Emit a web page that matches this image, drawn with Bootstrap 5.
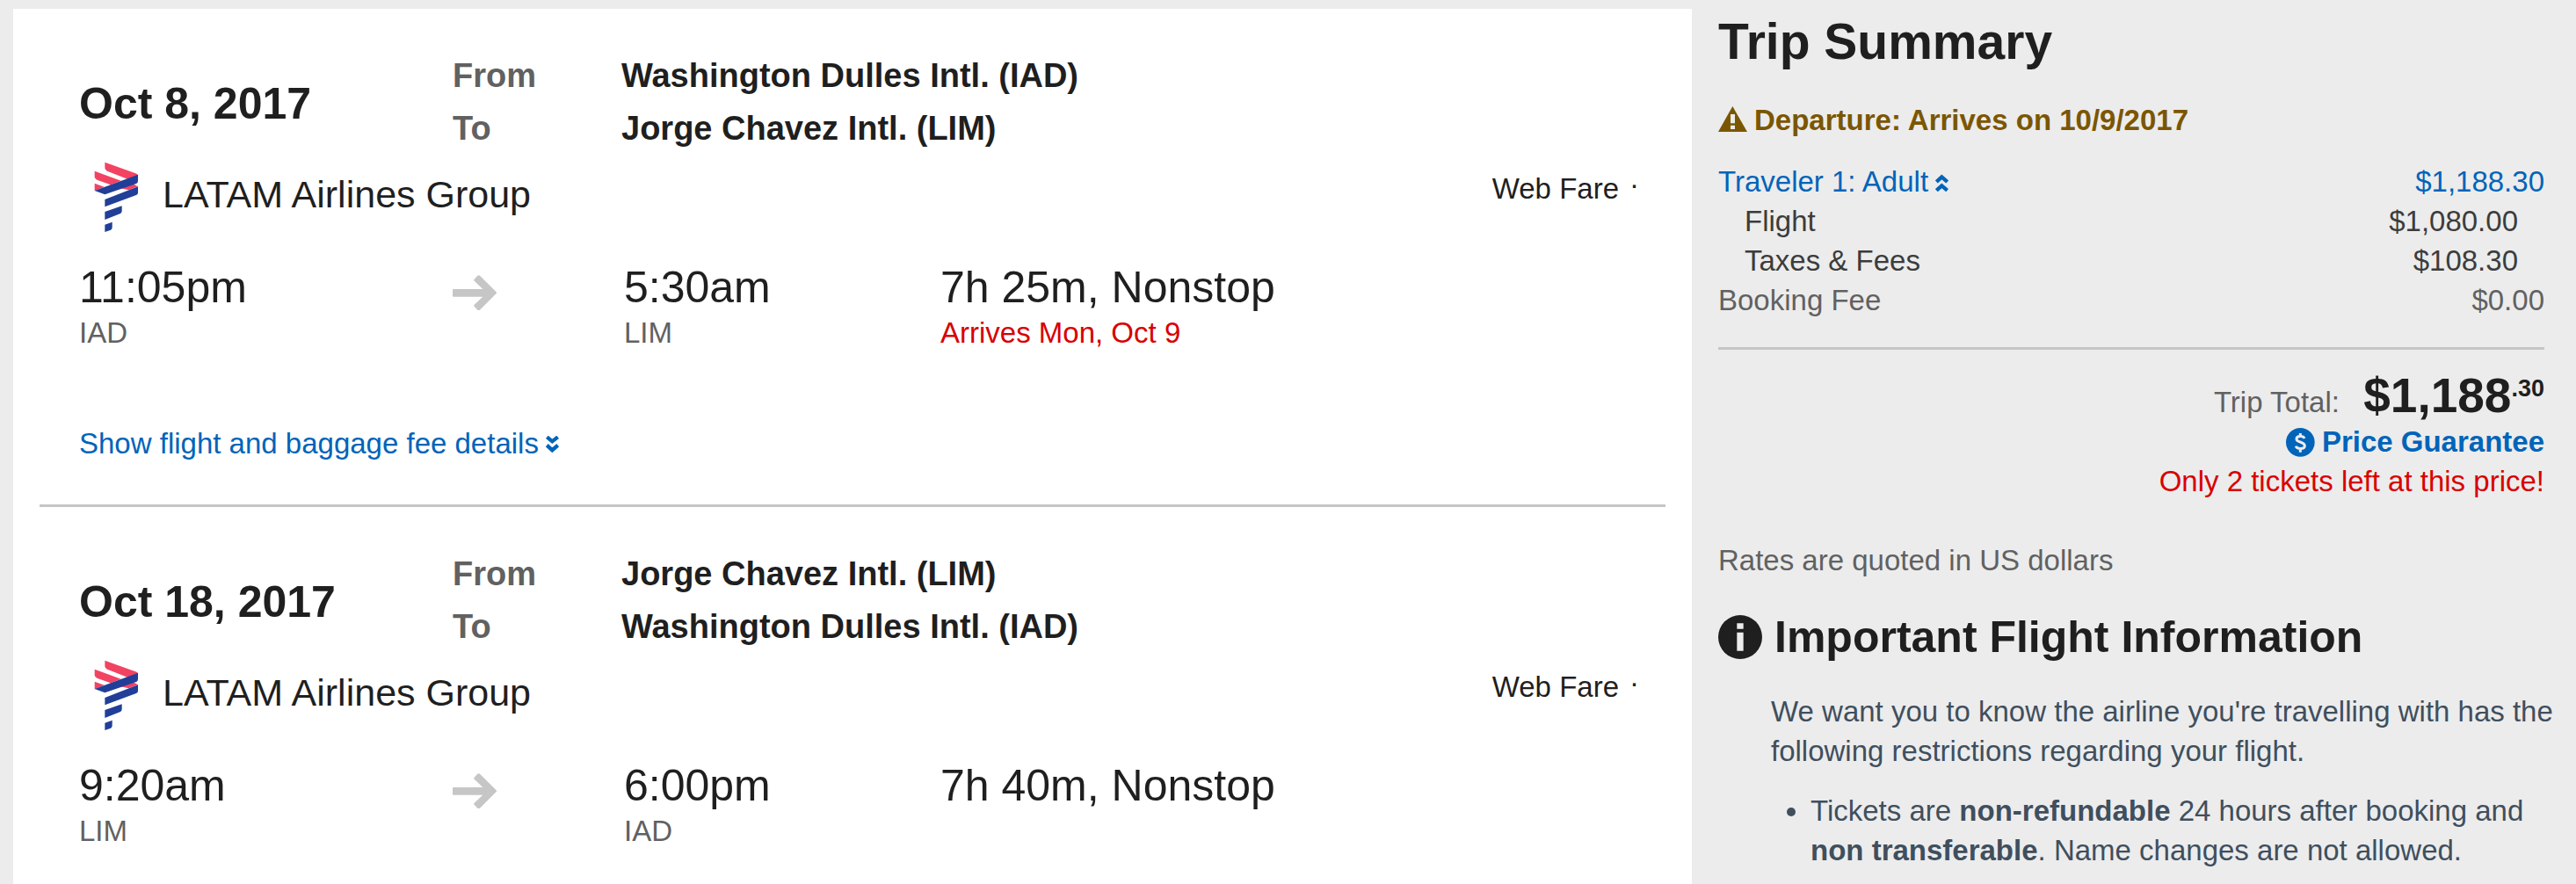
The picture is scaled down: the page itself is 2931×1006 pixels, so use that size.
<!DOCTYPE html>
<html lang="en">
<head>
<meta charset="utf-8">
<meta name="viewport" content="width=device-width, initial-scale=1">
<title>Trip Summary</title>
<link href="https://cdn.jsdelivr.net/npm/bootstrap@5.3.0/dist/css/bootstrap.min.css" rel="stylesheet">
<style>
  body { background: #ececec; color: #1f1f1f; font-family: "Liberation Sans", Arial, sans-serif; font-size: 33px; line-height: 45px; }
  a { color: #0064b9; text-decoration: none; }
  a:hover { text-decoration: underline; }
  .trip-layout { display: grid; grid-template-columns: 191fr 94fr; column-gap: 30px; padding: 10px 36px 0 15px; }
  .itinerary { background: #fff; padding: 0 30px; }
  .leg { padding: 46px 30px 47px 45px; }
  .leg + .leg { border-top: 3px solid #c6c6c6; }
  .leg-head { display: grid; grid-template-columns: 425fr 192fr 1158fr; line-height: 60px; font-size: 38px; font-weight: 700; }
  .leg-date { font-size: 50px; line-height: 60px; font-weight: 700; }
  .leg-label, .airport, .muted-text { color: #616161; }
  .carrier-logo { width: 95px; height: 90px; }
  .carrier-name { font-size: 43px; }
  .fare-type { gap: 12px; }
  .fare-dot { line-height: 35px; }
  .leg-times { display: grid; grid-template-columns: 425fr 195fr 360fr 795fr; margin-top: 32px; }
  .leg-big { font-size: 50px; line-height: 58px; }
  .arrow { width: 50px; height: 40px; margin-top: 15px; }
  .leg-details { margin-top: 81px; }
  .chevrons { width: 15px; height: 20px; margin-left: 8px; vertical-align: baseline; }
  .alert-red { color: #d80000; }
  .summary-title { font-size: 57px; line-height: 70px; padding-top: 2px; margin-bottom: 32px; }
  .warn { color: #7b5600; margin-bottom: 25px; }
  .warn svg { width: 33px; height: 29px; margin-right: 8px; vertical-align: -2px; }
  .fare-table { color: #3c3c3c; margin-bottom: 31px; }
  .fare-table td, .fare-table th { padding: 0; font-weight: 400; }
  .fare-sub th { padding-left: 30px; }
  .fare-sub td { padding-right: 30px; }
  .totals { border-top: 3px solid #c6c6c6; padding-top: 22px; margin-bottom: 45px; }
  .total-line { font-size: 55px; line-height: 60px; }
  .total-label { font-size: 33px; line-height: 45px; }
  .total-price { margin-left: 12px; }
  .cents { font-size: 27px; line-height: 20px; vertical-align: 18px; }
  .coin { width: 33px; height: 33px; margin-right: 8px; vertical-align: -6px; }
  .info-title { font-size: 50px; line-height: 60px; margin: 35px 0 32px; gap: 14px; }
  .info-title svg { width: 50px; height: 50px; }
  .info-body { color: #3f4f5e; padding-left: 60px; margin-right: -16px; }
  .info-body p { margin-bottom: 23px; }
  .info-body ul { padding-left: 45px; margin-bottom: 0; }
</style>
<script src="https://cdn.jsdelivr.net/npm/bootstrap@5.3.0/dist/js/bootstrap.bundle.min.js"></script>
</head>
<body>
<svg class="d-none" aria-hidden="true">
  <symbol id="latam" viewBox="0 18 285 270">
    <g fill="#f24362">
      <path d="M88 44 193 82Q202 85 201 90L165 101 96 74Q88 70 88 64Z"/>
      <path d="M53 74 143 107 108 121 61 104Q53 100 53 94Z"/>
      <path d="M53 116 86 128 53 142Z"/>
      <path d="M135 131 180 116 201 126 170 139Z"/>
    </g>
    <g fill="#213f98">
      <path d="M53 141 201 86V107Q201 114 195 117L88 154Z"/>
      <path d="M88 171 201 127V148Q201 154 195 156L88 196Z"/>
      <path d="M88 213 146 193V210Q146 216 141 219L88 240Z"/>
      <path d="M88 257 113 248V266Q113 272 108 275L88 282Z"/>
    </g>
  </symbol>
  <symbol id="arrow-right" viewBox="75 69 150 120">
    <path d="M78 117H178L149 89Q146 86 149 83L160 71Q164 68 168 71L224 127Q226 130 224 132L168 188Q164 191 160 188L149 176Q146 173 149 170L178 143H78Q75 143 75 140V120Q75 117 78 117Z" fill="#c6c6c6"/>
  </symbol>
  <symbol id="chev-down" viewBox="0 0 45 60">
    <path d="M4 4 22 19 41 4M4 32 22 49 41 32" fill="none" stroke="#0064b9" stroke-width="13"/>
  </symbol>
  <symbol id="chev-up" viewBox="0 0 45 60">
    <path d="M4 27 22 10 41 27M4 56 22 40 41 56" fill="none" stroke="#0064b9" stroke-width="13"/>
  </symbol>
</svg>

<div class="trip-layout min-vh-100">
  <main class="itinerary">
    <section class="leg">
      <div class="leg-head">
        <h2 class="leg-date align-self-center pt-1 mb-0">Oct 8, 2017</h2>
        <div class="leg-label"><div>From</div><div>To</div></div>
        <div><div>Washington Dulles Intl. (IAD)</div><div>Jorge Chavez Intl. (LIM)</div></div>
      </div>
      <div class="d-flex align-items-center">
        <svg class="carrier-logo" aria-hidden="true"><use href="#latam"/></svg>
        <div class="carrier-name">LATAM Airlines Group</div>
        <div class="fare-type ms-auto pt-3 align-self-start d-flex"><span>Web Fare</span><span class="fare-dot">·</span></div>
      </div>
      <div class="leg-times">
        <div><div class="leg-big">11:05pm</div><div class="airport">IAD</div></div>
        <svg class="arrow" aria-hidden="true"><use href="#arrow-right"/></svg>
        <div><div class="leg-big">5:30am</div><div class="airport">LIM</div></div>
        <div><div class="leg-big">7h 25m, Nonstop</div><div class="alert-red">Arrives Mon, Oct 9</div></div>
      </div>
      <div class="leg-details"><a href="#">Show flight and baggage fee details<svg class="chevrons" aria-hidden="true"><use href="#chev-down"/></svg></a></div>
    </section>
    <section class="leg">
      <div class="leg-head">
        <h2 class="leg-date align-self-center pt-1 mb-0">Oct 18, 2017</h2>
        <div class="leg-label"><div>From</div><div>To</div></div>
        <div><div>Jorge Chavez Intl. (LIM)</div><div>Washington Dulles Intl. (IAD)</div></div>
      </div>
      <div class="d-flex align-items-center">
        <svg class="carrier-logo" aria-hidden="true"><use href="#latam"/></svg>
        <div class="carrier-name">LATAM Airlines Group</div>
        <div class="fare-type ms-auto pt-3 align-self-start d-flex"><span>Web Fare</span><span class="fare-dot">·</span></div>
      </div>
      <div class="leg-times">
        <div><div class="leg-big">9:20am</div><div class="airport">LIM</div></div>
        <svg class="arrow" aria-hidden="true"><use href="#arrow-right"/></svg>
        <div><div class="leg-big">6:00pm</div><div class="airport">IAD</div></div>
        <div><div class="leg-big">7h 40m, Nonstop</div></div>
      </div>
    </section>
  </main>

  <aside>
    <h1 class="summary-title fw-bold">Trip Summary</h1>
    <div class="warn fw-bold"><svg viewBox="0 0 99 87" aria-hidden="true"><path d="M49 0 99 87H0Z" fill="#7b5600"/><path d="M42 27H57V58H42ZM42 65H57V78H42Z" fill="#ececec"/></svg>Departure: Arrives on 10/9/2017</div>
    <table class="fare-table w-100">
      <tbody>
        <tr><th scope="row"><a href="#">Traveler 1: Adult<svg class="chevrons" aria-hidden="true"><use href="#chev-up"/></svg></a></th><td class="text-end"><a href="#">$1,188.30</a></td></tr>
        <tr class="fare-sub"><th scope="row">Flight</th><td class="text-end">$1,080.00</td></tr>
        <tr class="fare-sub"><th scope="row">Taxes &amp; Fees</th><td class="text-end">$108.30</td></tr>
        <tr class="muted-text"><th scope="row">Booking Fee</th><td class="text-end">$0.00</td></tr>
      </tbody>
    </table>
    <div class="totals text-end">
      <div class="total-line"><span class="total-label muted-text">Trip Total:</span> <span class="total-price fw-bold">$1,188<span class="cents">.30</span></span></div>
      <div><a class="fw-bold" href="#"><svg class="coin" viewBox="0 0 99 99" aria-hidden="true"><circle cx="49" cy="49" r="49" fill="#0064b9"/><path d="M63 36C60 27 36 25 36 38 36 50 64 46 64 61 64 74 37 73 34 62M49 18V30M49 70V83" fill="none" stroke="#ececec" stroke-width="9"/></svg>Price Guarantee</a></div>
      <div class="alert-red">Only 2 tickets left at this price!</div>
    </div>
    <div class="muted-text">Rates are quoted in US dollars</div>
    <h2 class="info-title fw-bold d-flex align-items-center"><svg viewBox="0 0 150 150" aria-hidden="true"><circle cx="75" cy="75" r="75" fill="#1f1f1f"/><path d="M64 28H86V47H64ZM64 59H86V122H64Z" fill="#ececec"/></svg>Important Flight Information</h2>
    <div class="info-body">
      <p>We want you to know the airline you're travelling with has the following restrictions regarding your flight.</p>
      <ul>
        <li>Tickets are <strong>non-refundable</strong> 24 hours after booking and <strong>non transferable</strong>. Name changes are not allowed.</li>
      </ul>
    </div>
  </aside>
</div>
</body>
</html>
